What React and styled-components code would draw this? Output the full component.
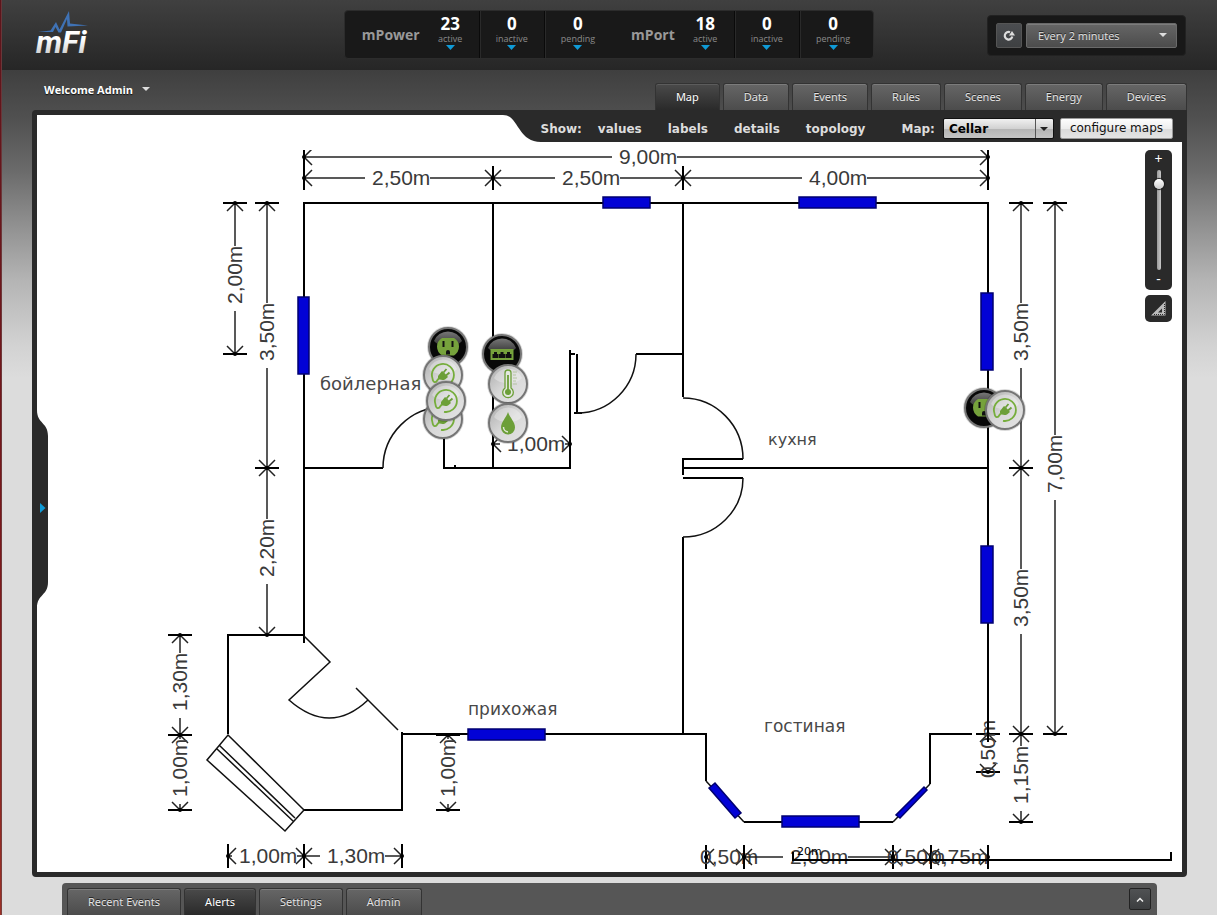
import { useState } from 'react';
import styled, { createGlobalStyle, css } from 'styled-components';

const GlobalStyle = createGlobalStyle`
  * {
    box-sizing: border-box;
  }
  body {
    margin: 0;
    background: #dcdcdc;
    font-family: 'Open Sans', 'Noto Sans', sans-serif;
    font-size: 11px;
  }
  button,
  select,
  input {
    margin: 0;
    font-family: inherit;
    font-size: inherit;
  }
`;

const raised = css`
  border: 1px solid #333;
  background: linear-gradient(#666, #4c4c4c);
  box-shadow: inset 0 1px 0 #7c7c7c;
  color: #e4e4e4;
  text-shadow: 0 -1px 0 #222;
`;

const St = {
  Page: styled.div`
    display: flex;
    flex-direction: column;
    position: relative;
    min-height: 100vh;
    background: linear-gradient(
      #3f3f3f 70px,
      #515151 120px,
      #6a6a6a 170px,
      #8e8e8e 222px,
      #b4b4b4 280px,
      #d2d2d2 345px,
      #dcdcdc 378px
    );
  `,
  WindowEdge: styled.div`
    position: absolute;
    top: 0;
    bottom: 0;
    left: 0;
    width: 2px;
    border-right: 1px solid rgba(110, 70, 70, 0.7);
    background: linear-gradient(#5d141b, #7a181c 60%, #9c3026);
  `,
  Header: styled.header`
    display: grid;
    grid-template-columns: 1fr auto 1fr;
    height: 70px;
    padding: 10px 31px 0 32px;
    align-items: start;
    background: linear-gradient(#404040, #262626);
  `,
  Logo: styled.a`
    display: block;
    width: 68px;
    height: 48px;
    svg {
      display: block;
    }
  `,
  Status: styled.div`
    display: flex;
    height: 49px;
    padding-right: 4px;
    border: 1px solid #2c2c2c;
    border-radius: 4px;
    background: #191919;
  `,
  StatusGroup: styled.div`
    display: flex;
    padding-right: 3px;
  `,
  StatusName: styled.div`
    padding: 0 2px 0 17px;
    color: #999;
    font-size: 14px;
    font-weight: 700;
    line-height: 48px;
  `,
  StatusCell: styled.button`
    display: flex;
    flex-direction: column;
    align-items: center;
    min-width: 57px;
    padding: 3px 16px 0;
    border: 0;
    border-left: ${(props) => (props.$first ? '0' : '1px solid #0a0a0a')};
    box-shadow: ${(props) => (props.$first ? 'none' : 'inset 1px 0 0 #2a2a2a')};
    background: none;
    color: #8a8a8a;
    font-size: 9px;
    line-height: 11px;
    strong {
      color: #fff;
      font-size: 17px;
      line-height: 19px;
    }
    svg {
      margin-top: 1px;
    }
  `,
  RefreshBox: styled.div`
    display: flex;
    justify-self: end;
    gap: 4px;
    margin-top: 5px;
    padding: 7px 8px;
    border: 1px solid #222;
    border-radius: 4px;
    background: #181818;
  `,
  RefreshButton: styled.button`
    display: flex;
    width: 26px;
    height: 25px;
    padding: 0;
    align-items: center;
    justify-content: center;
    border: 1px solid #555;
    border-radius: 2px;
    background: linear-gradient(#4b4d50, #3e4042);
  `,
  RefreshSelect: styled.div`
    position: relative;
    select {
      ${raised}
      appearance: none;
      width: 151px;
      height: 25px;
      padding: 0 24px 0 11px;
      border: 1px solid #6a6a6a;
      border-radius: 2px;
    }
    svg {
      position: absolute;
      top: 10px;
      right: 10px;
      pointer-events: none;
    }
  `,
  SubBar: styled.div`
    display: flex;
    height: 40px;
    padding: 0 30px 0 32px;
    align-items: flex-end;
    justify-content: space-between;
  `,
  Welcome: styled.button`
    display: flex;
    height: 40px;
    padding: 0 12px 2px;
    align-items: center;
    gap: 9px;
    border: 0;
    background: none;
    color: #fff;
    font-weight: 700;
    text-shadow: 0 1px 1px #111;
  `,
  Tabs: styled.nav`
    display: flex;
    gap: 3px;
    font-family: 'Noto Sans', 'Open Sans', sans-serif;
  `,
  Tab: styled.a`
    ${raised}
    height: 27px;
    padding: 0 20px;
    border-bottom: 0;
    border-radius: 3px 3px 0 0;
    line-height: 25px;
    text-decoration: none;
    white-space: nowrap;
    ${(props) =>
      props.$active &&
      css`
        background: linear-gradient(#4a4a4a, #2a2a2a);
        box-shadow: inset 0 1px 0 #5c5c5c;
        color: #fff;
      `}
  `,
  Panel: styled.main`
    display: flex;
    flex: 1;
    flex-direction: column;
    position: relative;
    margin: 0 30px 6px 32px;
    border: 5px solid #2a2a2a;
    border-radius: 4px 0 4px 4px;
    background: #fff;
  `,
  MapBar: styled.div`
    display: flex;
    height: 27px;
    margin-left: auto;
    color: #ddd;
    font-family: 'DejaVu Sans', sans-serif;
    font-size: 12px;
  `,
  MapBarBody: styled.div`
    display: flex;
    align-items: center;
    padding: 0 9px 0 0;
    background: #2a2a2a;
    font-weight: 700;
  `,
  ShowLink: styled.a`
    margin-right: 26px;
    color: #ddd;
    text-decoration: none;
  `,
  ShowLabel: styled.span`
    margin-right: 16px;
  `,
  MapLabel: styled.label`
    margin: 0 8px 0 10px;
  `,
  MapSelect: styled.div`
    position: relative;
    margin-right: 6px;
    select {
      display: block;
      appearance: none;
      width: 111px;
      height: 21px;
      padding: 0 20px 0 5px;
      border: 1px solid #111;
      border-radius: 2px;
      background: linear-gradient(#f0f0f0, #d2d2d2 50%, #b4b4b4 52%, #c4c4c4);
      color: #000;
      font-weight: 700;
    }
    svg {
      position: absolute;
      top: 1px;
      right: 1px;
      pointer-events: none;
    }
  `,
  ConfigureButton: styled.button`
    height: 21px;
    padding: 0 9px;
    border: 1px solid #999;
    border-radius: 2px;
    background: linear-gradient(#fdfdfd, #ededed 50%, #dadada 52%, #e4e4e4);
    color: #111;
    line-height: 19px;
  `,
  MapArea: styled.div`
    flex: 1;
    position: relative;
    min-height: 0;
  `,
  Plan: styled.svg`
    display: block;
    width: 100%;
    height: auto;
    font-family: 'Liberation Sans', Arial, sans-serif;
  `,
  Drawer: styled.button`
    position: absolute;
    top: 39%;
    left: -1px;
    padding: 0;
    border: 0;
    background: none;
    svg {
      display: block;
    }
  `,
  Zoom: styled.div`
    display: flex;
    flex-direction: column;
    position: absolute;
    top: 8px;
    right: 10px;
    gap: 5px;
  `,
  ZoomBox: styled.div`
    display: flex;
    flex-direction: column;
    width: 27px;
    height: 140px;
    align-items: center;
    border-radius: 5px;
    background: #2a2a2a;
  `,
  ZoomStep: styled.button`
    height: 20px;
    padding: 0 0 2px;
    border: 0;
    background: none;
    color: #fff;
    font-size: 14px;
    line-height: 16px;
  `,
  ZoomRange: styled.input`
    appearance: none;
    writing-mode: vertical-lr;
    direction: rtl;
    width: 12px;
    height: 100px;
    background: none;
    &::-webkit-slider-runnable-track {
      width: 4px;
      height: 100%;
      border-radius: 2px;
      background: linear-gradient(90deg, #999, #c8c8c8);
    }
    &::-webkit-slider-thumb {
      appearance: none;
      width: 10px;
      height: 10px;
      margin-left: -3px;
      border-radius: 50%;
      background: linear-gradient(#fff, #ccc);
      box-shadow: 0 0 1px 1px #1a1a1a;
    }
  `,
  RulerButton: styled.button`
    display: flex;
    width: 27px;
    height: 27px;
    padding: 0;
    align-items: center;
    justify-content: center;
    border: 0;
    border-radius: 5px;
    background: #2a2a2a;
  `,
  Scale: styled.div`
    position: absolute;
    right: 10px;
    bottom: 11px;
    width: 380px;
    height: 9px;
    padding-left: 3px;
    border: 2px solid #000;
    border-top: 0;
    color: #000;
    font-family: 'DejaVu Sans', sans-serif;
    font-size: 11px;
    line-height: 0;
  `,
  Footer: styled.footer`
    display: flex;
    height: 32px;
    margin: 0 60px 0 62px;
    padding: 5px 6px 0 5px;
    justify-content: space-between;
    border-radius: 4px 4px 0 0;
    background: #565656;
  `,
  ExpandButton: styled.button`
    display: flex;
    width: 22px;
    height: 22px;
    padding: 0;
    align-items: center;
    justify-content: center;
    border: 1px solid #222;
    border-radius: 2px;
    background: linear-gradient(#505254, #3c3e40);
  `,
};

const Caret = ({ width = 8, height = 4, color = '#ddd' }) => (
  <svg width={width} height={height} viewBox="0 0 8 4" preserveAspectRatio="none" aria-hidden="true">
    <path d="M0 0H8L4 4Z" fill={color} />
  </svg>
);

const LogoMark = () => (
  <svg width="68" height="48" viewBox="32 8 68 48" aria-hidden="true">
    <defs>
      <linearGradient id="logoFill" x1="0" y1="0" x2="0" y2="1">
        <stop offset="0.4" stopColor="#fff" />
        <stop offset="1" stopColor="#bbb" />
      </linearGradient>
    </defs>
    <text
      x="36"
      y="51"
      fill="url(#logoFill)"
      fontFamily="Roboto, 'Liberation Sans', sans-serif"
      fontSize="31"
      fontStyle="italic"
      fontWeight="700"
    >
      mFi
    </text>
    <path
      d="M38 30L50.500 28.500L56 20L59.500 27.500L69 9L70 21.500L88 23.500L67.500 24.500L67 17L61 30.500H58.500L55.500 25L53 30Z"
      fill="#3f72b5"
    />
  </svg>
);

const statusGroups = [
  { name: 'mPower', cells: [['23', 'active'], ['0', 'inactive'], ['0', 'pending']] },
  { name: 'mPort', cells: [['18', 'active'], ['0', 'inactive'], ['0', 'pending']] },
];

const StatusBox = () => (
  <St.Status>
    {statusGroups.map((group) => (
      <St.StatusGroup key={group.name}>
        <St.StatusName>{group.name}</St.StatusName>
        {group.cells.map(([count, label], i) => (
          <St.StatusCell key={label} type="button" $first={i === 0}>
            <strong>{count}</strong>
            {label}
            <Caret width={9} height={5} color="#0f9ad6" />
          </St.StatusCell>
        ))}
      </St.StatusGroup>
    ))}
  </St.Status>
);

// [direction, line position, from, to, text, start of text]
const dims = [
  ['h', 157, 304, 988, '9,00m', 619],
  ['h', 178, 304, 493, '2,50m', 372],
  ['h', 178, 493, 683, '2,50m', 562],
  ['h', 178, 683, 988, '4,00m', 809],
  ['h', 444, 493, 570, '1,00m', 507],
  ['h', 856, 228, 304, '1,00m', 239],
  ['h', 856, 304, 402, '1,30m', 327],
  ['h', 857, 706, 744, '0,50m', 700],
  ['h', 857, 744, 893, '2,00m', 790],
  ['h', 857, 893, 931, '0,50m', 887],
  ['h', 857, 931, 988, '0,75m', 930],
  ['v', 235, 203, 354, '2,00m', 304],
  ['v', 267, 203, 468, '3,50m', 361],
  ['v', 267, 468, 635, '2,20m', 577],
  ['v', 180, 635, 735, '1,30m', 711],
  ['v', 180, 735, 810, '1,00m', 797],
  ['v', 448, 735, 810, '1,00m', 797],
  ['v', 1021, 203, 468, '3,50m', 361],
  ['v', 1021, 468, 734, '3,50m', 627],
  ['v', 1021, 734, 822, '1,15m', 804],
  ['v', 1055, 203, 734, '7,00m', 493],
  ['v', 988, 734, 772, '0,50m', 778],
];

// drawn along x; vertical ones are the same thing turned by 90 degrees
const Dimension = ({ dim: [dir, pos, from, to, text, start] }) => {
  const flip = dir === 'v';
  const a = flip ? -to : from;
  const b = flip ? -from : to;
  const s = flip ? -start : start;
  const left = s - 7;
  const right = s + 58;
  const tick = pos === 444 ? 0 : 12;
  return (
    <g transform={flip ? 'rotate(-90)' : undefined} stroke="#222" strokeWidth="1.5" fill="none">
      {left > a && <path d={`M${a} ${pos}H${left}`} />}
      {right < b && <path d={`M${right} ${pos}H${b}`} />}
      <path d={`M${a} ${pos - tick}v${tick * 2}M${b} ${pos - tick}v${tick * 2}`} stroke="#000" strokeWidth="2" />
      <path d={`M${a + 8} ${pos - 8}L${a} ${pos}l8 8M${b - 8} ${pos - 8}L${b} ${pos}l-8 8`} />
      <circle cx={a} cy={pos} r="2" fill="#000" stroke="none" />
      <circle cx={b} cy={pos} r="2" fill="#000" stroke="none" />
      <text x={s} y={pos + 7} fill="#3a3a3a" stroke="none" fontSize="21">
        {text}
      </text>
    </g>
  );
};

const windows = [
  [603, 197, 47, 11],
  [799, 197, 77, 11],
  [298, 297, 11, 77],
  [981, 293, 12, 77],
  [981, 546, 12, 77],
  [468, 729, 77, 11],
  [782, 816, 77, 11],
];

const rooms = [
  ['бойлерная', 320, 390, 18],
  ['кухня', 768, 445, 16],
  ['прихожая', 468, 715, 17],
  ['гостиная', 764, 732, 17],
];

const pins = [
  ['outlet', 448, 347],
  ['plug', 443, 375],
  ['plug', 443, 419],
  ['plug', 446, 401],
  ['ports', 502, 354],
  ['thermo', 508, 384],
  ['drop', 508, 423],
  ['outlet', 984, 408],
  ['plug', 1005, 410],
];

const glyphs = {
  outlet: (
    <>
      <path d="M-6 -9H6Q11 -6 11 -0.500Q11 5 6 8.500H-6Q-11 5 -11 -0.500Q-11 -6 -6 -9Z" fill="#76a23c" />
      <path d="M-4.500 -6v6M4.500 -6v6" stroke="#111" strokeWidth="2" />
      <path d="M-2 7.500V5a2 2 0 0 1 4 0V7.500Z" fill="#111" />
    </>
  ),
  plug: (
    <>
      <path
        d="M-2 10.800A11 11 0 1 0 -10.500 3.500C-10 8 -7 8 -5.500 5Q-4.500 3 -2 3"
        fill="none"
        stroke="#76ad3c"
        strokeWidth="1.800"
      />
      <path d="M-5 1L-1 -4L1 -2.500L5 2L2 4.500Q-2 6 -5 3Z" fill="#6c9f38" />
      <path d="M0.500 -2.500L3.500 -6M3 0.500L6.500 -2.500" stroke="#6c9f38" strokeWidth="1.800" />
    </>
  ),
  ports: (
    <>
      <rect x="-11.500" y="-5" width="23" height="11" fill="#76a23c" />
      <path d="M-9.500 4v-4h1.500v-2h3v2h1.500v4zM-3 4v-4h1.500v-2h3v2H3v4zM3.500 4v-4H5v-2h3v2h1.500v4z" fill="#111" />
    </>
  ),
  thermo: (
    <>
      <path d="M-3 4V-11a3 3 0 0 1 6 0V4a5.300 5.300 0 1 1 -6 0Z" fill="#e4e8df" stroke="#6c9f38" strokeWidth="1.300" />
      <path d="M0 -9V7" stroke="#6c9f38" strokeWidth="1.800" />
      <circle cy="8" r="3" fill="#6c9f38" />
      <path d="M5 -12h4M5 -9h3M5 -6h4M5 -3h3M5 0h4" stroke="#a9bd93" strokeWidth="0.800" />
    </>
  ),
  drop: (
    <>
      <path d="M0 -11C2 -5 7 -1 7 4.500A7 7 0 0 1 -7 4.500C-7 -1 -2 -5 0 -11Z" fill="#6c9f38" />
      <path d="M-4.500 4A5 5 0 0 0 0 9" stroke="#dfe8d5" strokeWidth="1.500" fill="none" />
    </>
  ),
};

const Pin = ({ kind, x, y }) => {
  const dark = kind === 'outlet' || kind === 'ports';
  return (
    <g transform={`translate(${x} ${y})`}>
      <circle r="21" fill="#000" opacity="0.150" />
      <circle r="19" fill={dark ? '#080808' : 'url(#pinLight)'} stroke="#757575" strokeWidth="2" />
      <path
        d="M-14 -6A15 15 0 0 1 14 -6Q10 -1 0 -1T-14 -6Z"
        fill={dark ? 'url(#pinGloss)' : '#fff'}
        opacity={dark ? 1 : 0.300}
      />
      {glyphs[kind]}
    </g>
  );
};

const FloorPlan = () => (
  <St.Plan viewBox="37 142 1145 730" role="img" aria-label="Cellar">
    <defs>
      <linearGradient id="pinLight" x1="0" y1="0" x2="1" y2="1">
        <stop offset="0" stopColor="#aaa" />
        <stop offset="0.500" stopColor="#d8d8d8" />
        <stop offset="1" stopColor="#e4e4e4" />
      </linearGradient>
      <linearGradient id="pinGloss" x1="0" y1="0" x2="0" y2="1">
        <stop offset="0" stopColor="#777" />
        <stop offset="1" stopColor="#333" />
      </linearGradient>
      <clipPath id="sheet">
        <rect x="37" y="150" width="1145" height="719" />
      </clipPath>
    </defs>
    <g clipPath="url(#sheet)">
      {dims.map((dim) => (
        <Dimension key={dim.join()} dim={dim} />
      ))}
      <g fill="none" stroke="#000" strokeWidth="2">
        <path d="M304 643V203H988V742M493 203V468M683 203V397M683 354H636" />
        <path d="M304 468H383M444 436V468H570V350M570 354H575M577 354V413M574 413H582M455 465v3" />
        <path d="M683 475V459H743M683 468H988M683 478H743M683 537V734" />
        <path d="M402 734H706V781M744 822H893M930 784V734H972" />
        <path d="M304 635H228V734M402 732V810H304" />
      </g>
      <g fill="none" stroke="#111" strokeWidth="1.500">
        <path d="M383 468A61 61 0 0 1 444 407M577 413A59 59 0 0 0 636 354" />
        <path d="M683 398A60 61 0 0 1 743 459M743 478A60 59 0 0 1 683 537" />
        <path d="M706 781L744 822M893 822L930 784" />
        <path d="M304 636L330 662L289 700Q330 736 368 700M356 688L398 730" />
        <path d="M228 735L304 810L285 831L207 760ZM219 745L295 818M217 749L293 821" />
      </g>
      <g fill="#0202d6" stroke="#000070" strokeWidth="1.500">
        {windows.map(([x, y, width, height]) => (
          <rect key={`${x}-${y}`} x={x} y={y} width={width} height={height} />
        ))}
        <path d="M709 788L715 783L741 813L735 818ZM896 815L900 818L927 790L924 787Z" />
      </g>
      <g fill="#484848" fontFamily="'DejaVu Sans', sans-serif">
        {rooms.map(([name, x, y, size]) => (
          <text key={name} x={x} y={y} fontSize={size}>
            {name}
          </text>
        ))}
      </g>
    </g>
    {pins.map(([kind, x, y]) => (
      <Pin key={`${x}-${y}`} kind={kind} x={x} y={y} />
    ))}
  </St.Plan>
);

const MapToolbar = () => (
  <St.MapBar>
    <svg width="38" height="27" viewBox="0 0 38 27" aria-hidden="true">
      <path d="M0 0C16 0 14 27 38 27V0Z" fill="#2a2a2a" />
    </svg>
    <St.MapBarBody>
      <St.ShowLabel>Show:</St.ShowLabel>
      {['values', 'labels', 'details', 'topology'].map((item) => (
        <St.ShowLink key={item} href="#">
          {item}
        </St.ShowLink>
      ))}
      <St.MapLabel htmlFor="map">Map:</St.MapLabel>
      <St.MapSelect>
        <select id="map">
          <option>Cellar</option>
        </select>
        <svg width="18" height="19" viewBox="0 0 18 19" aria-hidden="true">
          <path d="M0.500 0V19" stroke="#555" />
          <path d="M5 8H13L9 12Z" fill="#222" />
        </svg>
      </St.MapSelect>
      <St.ConfigureButton type="button">configure maps</St.ConfigureButton>
    </St.MapBarBody>
  </St.MapBar>
);

const tabs = ['Map', 'Data', 'Events', 'Rules', 'Scenes', 'Energy', 'Devices'];
const footerTabs = ['Recent Events', 'Alerts', 'Settings', 'Admin'];

const App = () => {
  const [zoom, setZoom] = useState(90);

  return (
    <St.Page>
      <GlobalStyle />
      <St.Header>
        <St.Logo href="#" aria-label="mFi">
          <LogoMark />
        </St.Logo>
        <StatusBox />
        <St.RefreshBox>
          <St.RefreshButton type="button" aria-label="Refresh">
            <svg width="12" height="12" viewBox="0 0 12 12" aria-hidden="true">
              <path d="M7 2.200A3.800 3.800 0 1 0 9.300 6.500" fill="none" stroke="#ddd" strokeWidth="2.200" />
              <path d="M6 5.500L9 1L12 5.500Z" fill="#ddd" />
            </svg>
          </St.RefreshButton>
          <St.RefreshSelect>
            <select aria-label="Refresh interval">
              <option>Every 2 minutes</option>
            </select>
            <Caret />
          </St.RefreshSelect>
        </St.RefreshBox>
      </St.Header>
      <St.SubBar>
        <St.Welcome type="button">
          Welcome Admin
          <Caret />
        </St.Welcome>
        <St.Tabs>
          {tabs.map((tab) => (
            <St.Tab key={tab} href="#" $active={tab === 'Map'}>
              {tab}
            </St.Tab>
          ))}
        </St.Tabs>
      </St.SubBar>
      <St.Panel>
        <MapToolbar />
        <St.MapArea>
          <FloorPlan />
          <St.Zoom>
            <St.ZoomBox>
              <St.ZoomStep type="button">+</St.ZoomStep>
              <St.ZoomRange
                type="range"
                aria-label="Zoom"
                value={zoom}
                onChange={(e) => setZoom(Number(e.target.value))}
              />
              <St.ZoomStep type="button">-</St.ZoomStep>
            </St.ZoomBox>
            <St.RulerButton type="button" aria-label="Measure">
              <svg width="15" height="15" viewBox="0 0 15 15" aria-hidden="true">
                <path d="M0 14.500L14.500 0V14.500ZM7 11.500H11V7.500Z" fill="#bbb" fillRule="evenodd" />
                <path d="M13.500 3V13.500H3" fill="none" stroke="#2a2a2a" strokeDasharray="1 1" />
              </svg>
            </St.RulerButton>
          </St.Zoom>
          <St.Scale>20m</St.Scale>
        </St.MapArea>
        <St.Drawer type="button" aria-label="Open list">
          <svg width="12" height="198" viewBox="0 0 12 198" aria-hidden="true">
            <path d="M0 0H1C1 14 12 12 12 26V172C12 186 1 184 1 198H0Z" fill="#2a2a2a" />
            <path d="M4 93L9.500 98L4 103Z" fill="#0f9ad6" />
          </svg>
        </St.Drawer>
      </St.Panel>
      <St.Footer>
        <St.Tabs>
          {footerTabs.map((tab) => (
            <St.Tab key={tab} href="#" $active={tab === 'Alerts'}>
              {tab}
            </St.Tab>
          ))}
        </St.Tabs>
        <St.ExpandButton type="button" aria-label="Expand">
          <svg width="8" height="5" viewBox="0 0 8 5" aria-hidden="true">
            <path d="M1 4.500L4 1.500L7 4.500" fill="none" stroke="#eee" strokeWidth="1.500" />
          </svg>
        </St.ExpandButton>
      </St.Footer>
      <St.WindowEdge />
    </St.Page>
  );
};

export default App;
